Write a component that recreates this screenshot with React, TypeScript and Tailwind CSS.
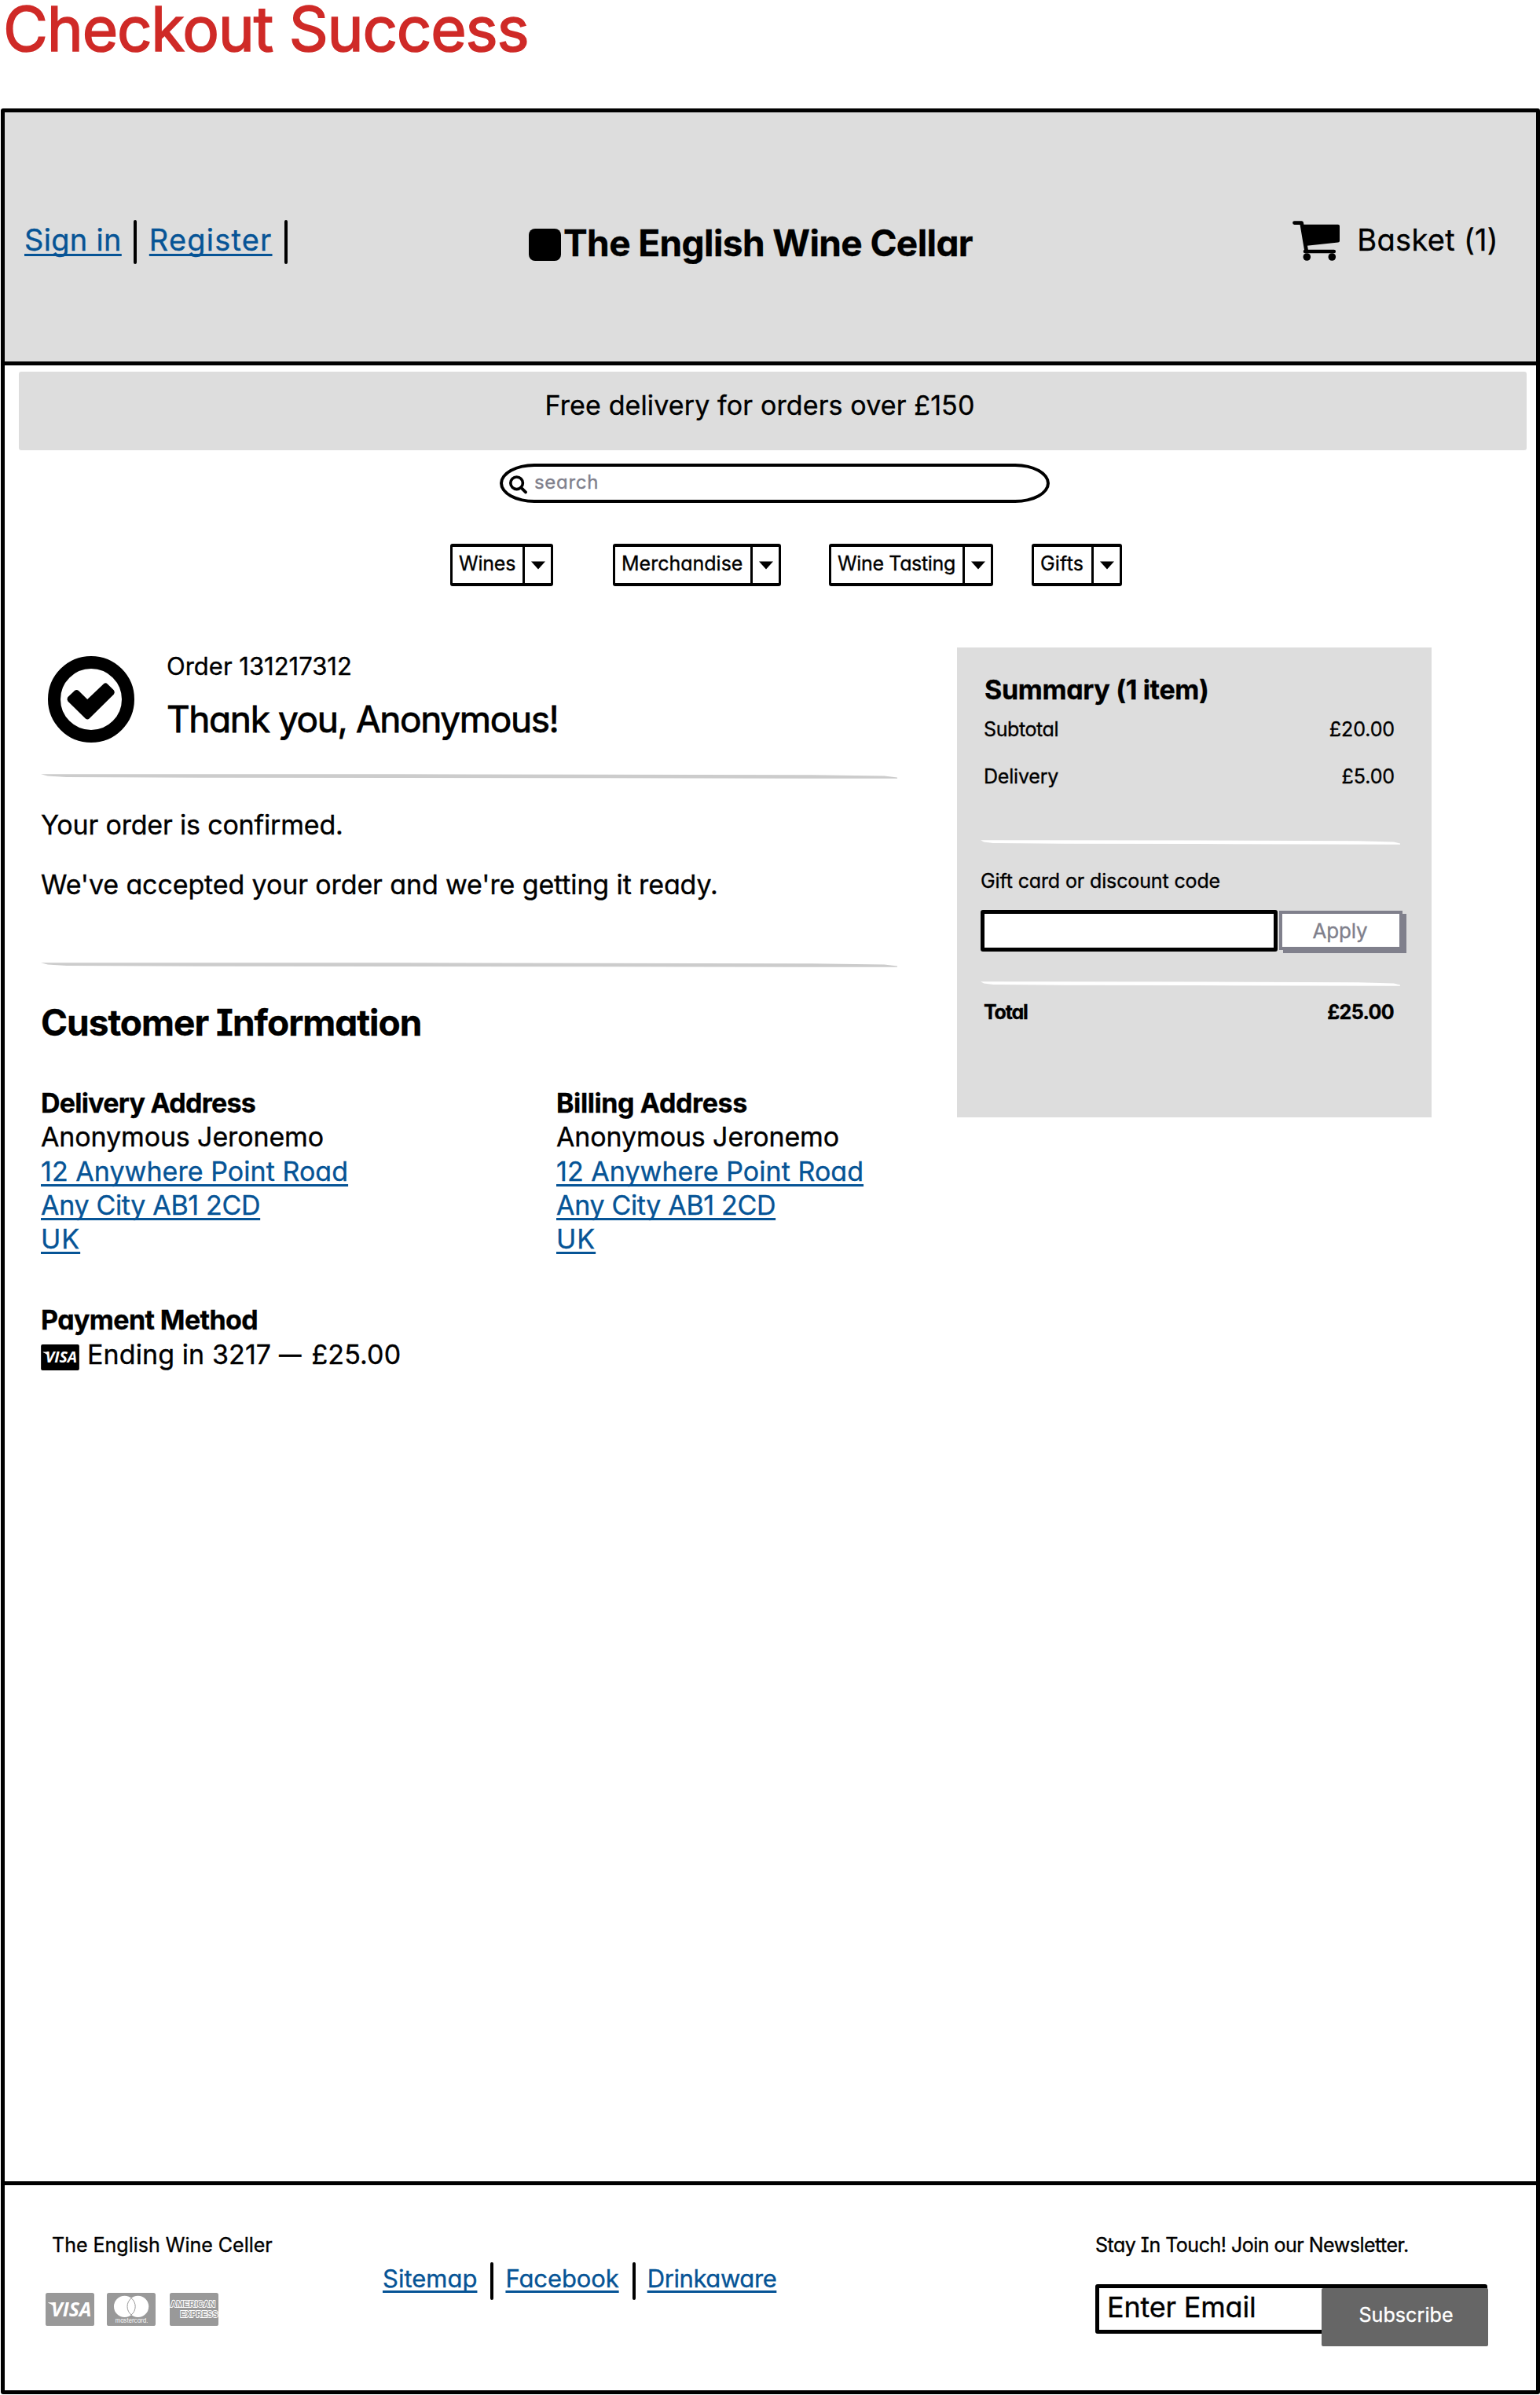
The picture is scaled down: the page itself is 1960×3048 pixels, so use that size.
import type { ReactNode } from "react";

const LINK =
  "text-[#065496] underline decoration-[2.5px] underline-offset-[4px] [text-decoration-skip-ink:none]";

function Cart() {
  return (
    <svg width="60" height="51" viewBox="0 0 60 51" className="shrink-0">
      <path
        d="M2.5 2.6H11.6L17.6 38"
        fill="none"
        stroke="#000"
        strokeWidth="4.8"
        strokeLinecap="round"
        strokeLinejoin="round"
      />
      <path d="M12 4.8H58Q60 4.8 60 6.8V25.4Q60 27.4 58 27.6L16 32Z" />
      <path d="M16 39H52.8" stroke="#000" strokeWidth="4.6" strokeLinecap="round" />
      <circle cx="18.3" cy="46" r="4.8" />
      <circle cx="50.3" cy="46" r="4.8" />
    </svg>
  );
}

function CheckCircle() {
  return (
    <svg width="110" height="110" viewBox="0 0 110 110" className="shrink-0">
      <circle cx="55" cy="55" r="47" fill="none" stroke="#000" strokeWidth="16" />
      <path d="M25.2 52.2L34.2 43.8Q36.6 42 39 44L50.2 55L71 35.2Q73.4 33.4 75.8 35.4L84 43.6Q85.6 46 84 48.4L52.6 79.6Q50.2 81.4 47.8 79.4L25.4 57.6Q23.6 55 25.2 52.2Z" />
    </svg>
  );
}

function Magnifier() {
  return (
    <svg width="23" height="24" viewBox="0 0 23 24" className="shrink-0">
      <circle cx="9.6" cy="9.8" r="7.8" fill="none" stroke="#000" strokeWidth="3.6" />
      <path d="M15 15.4L21 21.4" stroke="#000" strokeWidth="3.8" strokeLinecap="round" />
    </svg>
  );
}

function VisaCard({ width, height, fill }: { width: number; height: number; fill: string }) {
  return (
    <svg width={width} height={height} viewBox="0 0 62 42" className="shrink-0">
      <rect width="62" height="42" rx="2.6" fill={fill} />
      <path d="M3.2 12.2H10.5L13.6 22.5Q10.5 15 3.2 12.8Z" fill="#fff" />
      <text
        x="7"
        y="29.8"
        fill="#fff"
        fontFamily="Open Sans, sans-serif"
        fontSize="25"
        fontStyle="italic"
        fontWeight="700"
        textLength="51.5"
        lengthAdjust="spacingAndGlyphs"
      >
        VISA
      </text>
    </svg>
  );
}

function MasterCard() {
  return (
    <svg width="62" height="42" viewBox="0 0 62 42" className="shrink-0">
      <rect width="62" height="42" rx="2.6" fill="#999" />
      <circle cx="22.6" cy="17.4" r="13.6" fill="#fff" />
      <circle cx="39.6" cy="17.4" r="13.6" fill="#fff" />
      <path
        d="M31.1 6.8A13.6 13.6 0 0 1 31.1 28A13.6 13.6 0 0 1 31.1 6.8Z"
        fill="#fff"
        stroke="#999"
        strokeWidth="1"
      />
      <text
        x="10.8"
        y="38.2"
        fill="#fff"
        fontFamily="Inter, sans-serif"
        fontSize="7.6"
        textLength="41.6"
        lengthAdjust="spacingAndGlyphs"
        className="[-webkit-text-stroke:0]"
      >
        mastercard.
      </text>
    </svg>
  );
}

function AmexCard() {
  return (
    <svg width="62" height="42" viewBox="0 0 62 42" className="shrink-0">
      <rect width="62" height="42" rx="2.6" fill="#999" />
      <g
        fill="#999"
        stroke="#fff"
        strokeWidth="1.9"
        paintOrder="stroke"
        fontFamily="Liberation Sans, sans-serif"
        fontSize="11"
        fontWeight="700"
      >
        <text x="1" y="18.4" textLength="57" lengthAdjust="spacingAndGlyphs">
          AMERICAN
        </text>
        <text x="13.6" y="31.2" textLength="47.6" lengthAdjust="spacingAndGlyphs">
          EXPRESS
        </text>
      </g>
    </svg>
  );
}

function Rule({ className }: { className: string }) {
  return (
    <svg viewBox="0 0 1000 6" preserveAspectRatio="none" className={`block h-[6px] ${className}`}>
      <path d="M0 0.2L500 0.4L900 1.2L985 2.4L1000 4.4V5.8L600 5.2L200 4.8L30 4L8 2.4Z" fill="currentColor" />
    </svg>
  );
}

function Bar({ className }: { className: string }) {
  return <span className={`w-[4px] rounded-[2px] bg-black ${className}`} />;
}

function Select({ width, children }: { width: string; children: ReactNode }) {
  return (
    <div
      className={`flex h-[54px] rounded-[3px] border-x-[3.5px] border-y-[4px] border-black text-[25px] ${width}`}
    >
      <span className="flex-1 pl-[8px] leading-[43px] whitespace-nowrap">{children}</span>
      <span className="flex w-[36px] justify-center border-l-[3.5px] border-black pt-[18px]">
        <svg width="18" height="11" viewBox="0 0 18 11">
          <path d="M0 0.6H18L9 10.6Z" />
        </svg>
      </span>
    </div>
  );
}

function Address({ title, titleClass }: { title: string; titleClass: string }) {
  return (
    <div className="text-[34px] leading-[43.3px]">
      <div className={`font-bold ${titleClass}`}>{title}</div>
      <div className="tracking-[-0.13px]">Anonymous Jeronemo</div>
      <div>
        <a className={`tracking-[0.05px] ${LINK}`}>12 Anywhere Point Road</a>
      </div>
      <div>
        <a className={`tracking-[-0.33px] ${LINK}`}>Any City AB1 2CD</a>
      </div>
      <div>
        <a className={`tracking-[1px] ${LINK}`}>UK</a>
      </div>
    </div>
  );
}

export default function App() {
  return (
    <div className="flex h-[3048px] w-[1960px] flex-col overflow-hidden bg-white font-[Inter,sans-serif] text-black [-webkit-text-stroke:0.35px] [font-feature-settings:'cv11','cv08']">
      <h1 className="h-[138px] shrink-0 pl-[4px] text-[78px] leading-[73px] tracking-[-1.2px] text-[#cf2a27] [-webkit-text-stroke:1.6px]">
        Checkout Success
      </h1>

      <div className="ml-px flex h-[2909px] w-[1959px] shrink-0 flex-col rounded-[3px] border-x-[5px] border-y-[5px] border-black">
        <header className="flex h-[322px] shrink-0 items-center border-b-[5px] border-black bg-[#ddd] pt-[7px] pr-[48px] text-[38px]">
          <nav className="flex w-[667px] items-center pl-[25px] leading-[50px]">
            <a className={`tracking-[0.3px] ${LINK}`}>Sign in</a>
            <Bar className="mt-[5px] mr-[16px] ml-[15px] h-[56px]" />
            <a className={`tracking-[1.2px] ${LINK}`}>Register</a>
            <Bar className="mt-[5px] ml-[15px] h-[56px]" />
          </nav>
          <div className="flex items-center gap-[3px] pt-[7px]">
            <span className="mt-[5px] h-[41px] w-[41px] rounded-[8px] bg-black" />
            <span className="text-[46px] leading-[56px] font-bold tracking-[-0.6px] whitespace-nowrap">
              The English Wine Cellar
            </span>
          </div>
          <div className="ml-auto flex items-center gap-[22px]">
            <div className="pt-[3px]">
              <Cart />
            </div>
            <span className="leading-[50px] tracking-[0.3px] whitespace-nowrap">Basket (1)</span>
          </div>
        </header>

        <main className="flex flex-1 flex-col">
          <div className="mt-[8px] ml-[18px] flex h-[100px] w-[1919px] items-center justify-center rounded-[3px] bg-[#ddd] pr-[33px] pb-[15px] text-[34px] tracking-[0.12px]">
            Free delivery for orders over £150
          </div>

          <div className="mt-[17px] ml-[630px] flex h-[50px] w-[700px] gap-[9px] border-[4px] border-black [border-radius:44px/25px] pt-[11px] pl-[8px]">
            <Magnifier />
            <span className="text-[24px] leading-[17px] tracking-[0.7px] text-[#80808c]">search</span>
          </div>

          <div className="mt-[52px] ml-[567px] flex">
            <Select width="w-[131px] tracking-[-0.2px]">Wines</Select>
            <Select width="ml-[76px] w-[214px]">Merchandise</Select>
            <Select width="ml-[61px] w-[209px] tracking-[-0.35px]">Wine Tasting</Select>
            <Select width="ml-[49px] w-[115px] tracking-[0.2px]">Gifts</Select>
          </div>

          <div className="mt-[78px] ml-[46px] flex gap-[76px]">
            <section className="w-[1090px]">
              <div className="flex h-[161px] gap-[41px] pl-[9px]">
                <div className="pt-[11px]">
                  <CheckCircle />
                </div>
                <div>
                  <div className="text-[31px] leading-[47px]">Order 131217312</div>
                  <div className="mt-[15px] text-[46px] leading-[59px] tracking-[-1.4px] [-webkit-text-stroke:0.8px]">
                    Thank you, Anonymous!
                  </div>
                </div>
              </div>
              <Rule className="w-full text-[#ccc]" />
              <p className="mt-[34px] text-[34px] leading-[49px] tracking-[-0.18px]">Your order is confirmed.</p>
              <p className="mt-[27px] text-[34px] leading-[49px] tracking-[-0.12px]">
                We've accepted your order and we're getting it ready.
              </p>
              <Rule className="mt-[75px] w-full text-[#ccc]" />
              <h2 className="mt-[40px] text-[46px] leading-[60px] font-bold tracking-[-1px]">
                Customer Information
              </h2>
              <div className="mt-[51px] grid grid-cols-[656px_1fr] whitespace-nowrap">
                <Address title="Delivery Address" titleClass="tracking-[-0.75px]" />
                <Address title="Billing Address" titleClass="tracking-[-0.4px]" />
              </div>
              <div className="mt-[60px] text-[34px] leading-[44px]">
                <div className="font-bold tracking-[-0.6px]">Payment Method</div>
                <div className="flex gap-[10px]">
                  <div className="pt-[9px]">
                    <VisaCard width={49} height={33} fill="#000" />
                  </div>
                  <span className="tracking-[0.1px]">
                    Ending in 3217 <span className="inline-block w-[32px] origin-left scale-x-[.84]">—</span> £25.00
                  </span>
                </div>
              </div>
            </section>

            <aside className="h-[598px] w-[604px] bg-[#ddd] pt-[31px] pl-[30px] text-[25px]">
              <h3 className="pl-[5px] text-[34px] leading-[45px] font-bold tracking-[-0.33px]">Summary (1 item)</h3>
              <div className="w-[534px]">
                <div className="flex justify-between pt-px pr-[7px] pl-[4px] leading-[55px]">
                  <span className="tracking-[-0.4px]">Subtotal</span>
                  <span className="tracking-[-0.1px]">£20.00</span>
                </div>
                <div className="flex justify-between pr-[7px] pl-[4px] leading-[65px] tracking-[-0.1px]">
                  <span className="tracking-[-0.2px]">Delivery</span>
                  <span>£5.00</span>
                </div>
              </div>
              <Rule className="mt-[48px] w-[534px] text-white" />
              <div className="mt-[26px] leading-[40px] tracking-[-0.13px]">Gift card or discount code</div>
              <div className="mt-[17px] flex h-[53px] gap-[2px]">
                <div className="h-[53px] w-[378px] rounded-[3px] border-[5px] border-black bg-white" />
                <button className="mt-px h-[50px] w-[157px] border-[4px] border-[#80808c] bg-white pt-px pr-[2px] text-[26px] leading-[38px] tracking-[-0.2px] text-[#80808c] [box-shadow:5px_4px_0_#80808c]">
                  Apply
                </button>
              </div>
              <Rule className="mt-[38px] w-[534px] text-white" />
              <div className="mt-[13px] flex w-[534px] justify-between pr-[8px] pl-[4px] leading-[40px] font-bold">
                <span className="tracking-[-1.2px]">Total</span>
                <span className="tracking-[-0.6px]">£25.00</span>
              </div>
            </aside>
          </div>
        </main>

        <footer className="flex h-[266px] shrink-0 border-t-[5px] border-black pt-[58px] pl-[52px] text-[25px]">
          <div className="w-[429px]">
            <div className="pl-[8px] leading-[36px]">The English Wine Celler</div>
            <div className="mt-[43px] flex">
              <VisaCard width={62} height={42} fill="#999" />
              <div className="ml-[16px]">
                <MasterCard />
              </div>
              <div className="ml-[18px]">
                <AmexCard />
              </div>
            </div>
          </div>
          <nav className="flex h-[40px] w-[905px] pt-[40px] text-[31px] leading-[41px]">
            <a className={LINK}>Sitemap</a>
            <Bar className="ml-[17px] h-[48px]" />
            <a className={`ml-[15px] tracking-[-0.1px] ${LINK}`}>Facebook</a>
            <Bar className="ml-[17px] h-[48px]" />
            <a className={`ml-[15px] tracking-[-0.4px] ${LINK}`}>Drinkaware</a>
          </nav>
          <div>
            <div className="pl-[2px] leading-[36px] tracking-[-0.5px]">Stay In Touch! Join our Newsletter.</div>
            <div className="relative mt-[32px] ml-[2px] h-[63px] w-[499px] rounded-[3px] border-[5px] border-black pl-[10px] text-[36px] leading-[49px] tracking-[-0.2px]">
              Enter Email
              <button className="absolute top-0 left-[283px] h-[74px] w-[212px] rounded-[2px] bg-[#666] pb-[5px] pl-[3px] text-[25px] tracking-[0.1px] text-white">
                Subscribe
              </button>
            </div>
          </div>
        </footer>
      </div>
    </div>
  );
}
